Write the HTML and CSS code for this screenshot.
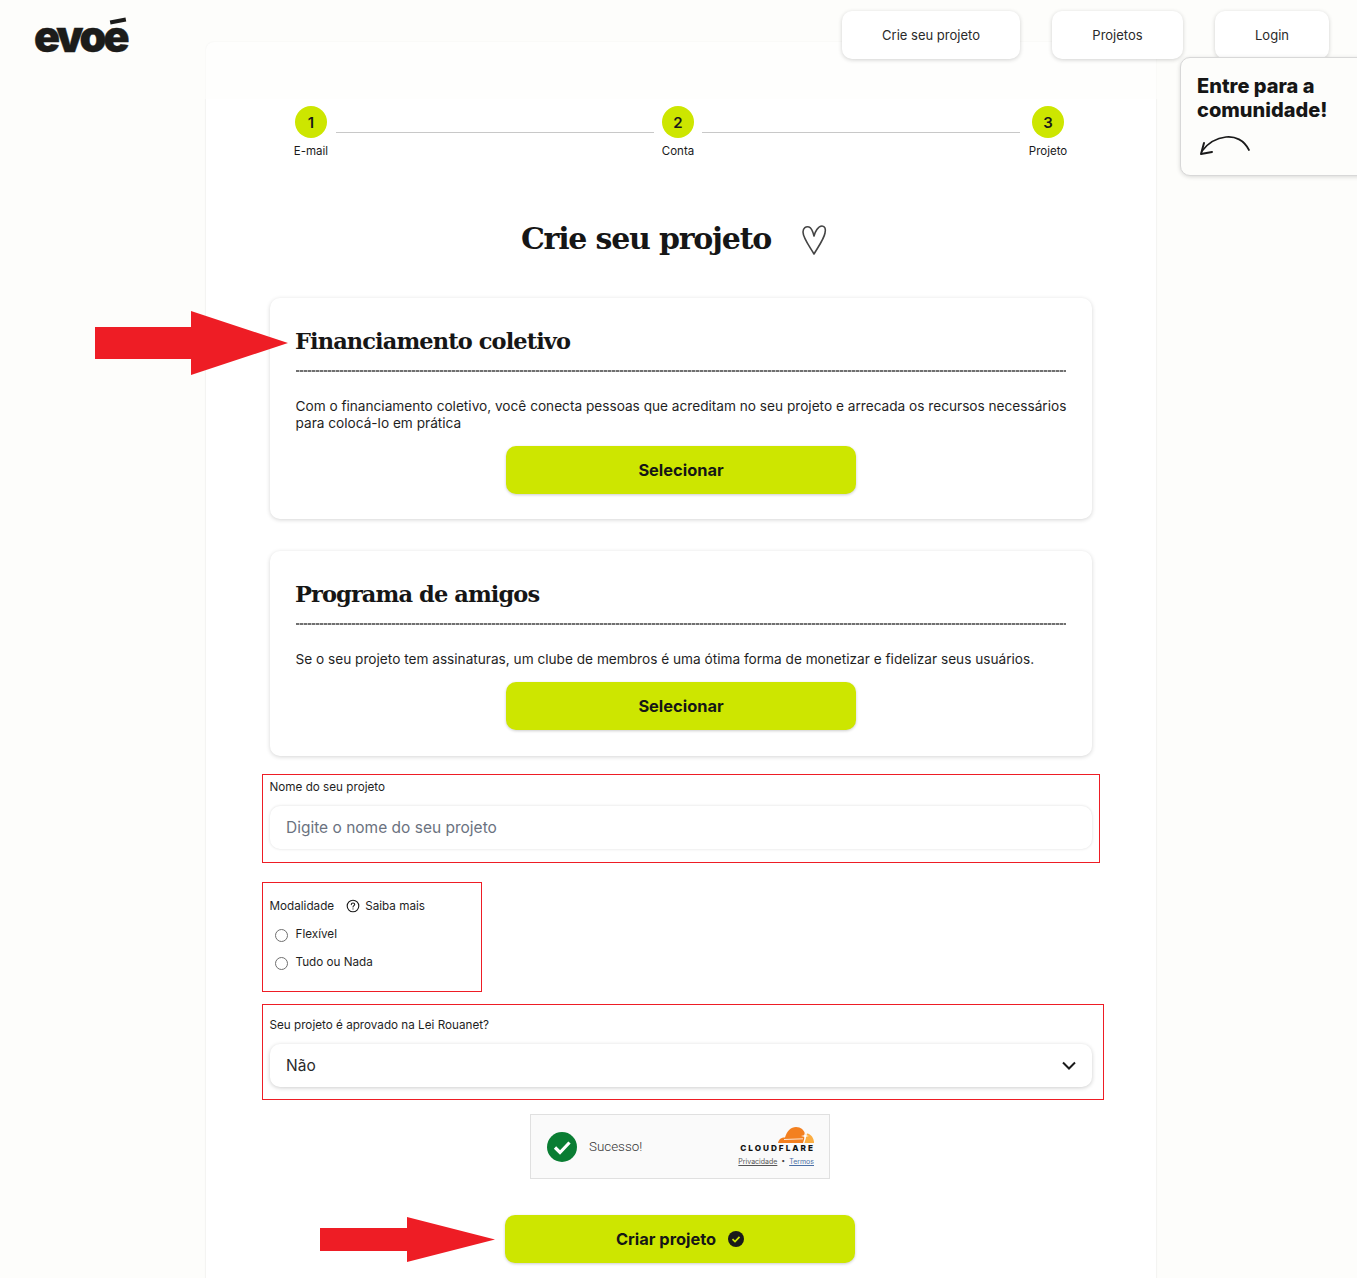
FILE: index.html
```html
<!DOCTYPE html>
<html lang="pt-BR">
<head>
<meta charset="utf-8">
<title>Crie seu projeto - evoé</title>
<link rel="stylesheet" href="styles.css">
</head>
<body>
<div class="page">
  <header class="topbar">
    <span class="logo">evoe</span>
    <nav class="nav">
      <a class="nav-btn nav-create">Crie seu projeto</a>
      <a class="nav-btn nav-projects">Projetos</a>
      <a class="nav-btn nav-login">Login</a>
    </nav>
  </header>

  <aside class="community">
    <p class="community-title">Entre para a comunidade!</p>
    <svg class="community-arrow" width="52" height="24" viewBox="0 0 52 24" fill="none" stroke="#1a1a1a" stroke-linecap="round" stroke-linejoin="round"><path d="M50 15C45 5 36 1 27 2C18 3 9 8 3 16" stroke-width="1.7"/><path d="M5 8L2 19L13 17" stroke-width="2"/></svg>
  </aside>

  <main class="panel">
    <ol class="steps">
      <li class="step"><span class="step-num">1</span><span class="step-label">E-mail</span></li>
      <li class="step-line line-a"></li>
      <li class="step"><span class="step-num">2</span><span class="step-label">Conta</span></li>
      <li class="step-line line-b"></li>
      <li class="step"><span class="step-num">3</span><span class="step-label">Projeto</span></li>
    </ol>

    <div class="title-row">
      <h1 class="title">Crie seu projeto</h1>
      <svg class="heart" width="26" height="32" viewBox="0 0 26 32" fill="none" stroke="#444" stroke-width="1.6" stroke-linecap="round" stroke-linejoin="round"><path d="M13 30C9 23 2 14 2 8C2 4 5 2 8 3C11 4 12 8 13 12C14 8 17 2 21 2C24 2 25 5 24 9C23 15 17 23 13 30Z"/></svg>
    </div>

    <section class="card card-first">
      <h2 class="card-title">Financiamento coletivo</h2>
      <p class="card-text">Com o financiamento coletivo, você conecta pessoas que acreditam no seu projeto e arrecada os recursos necessários para colocá-lo em prática</p>
      <button class="btn btn-select" type="button">Selecionar</button>
    </section>

    <section class="card card-second">
      <h2 class="card-title">Programa de amigos</h2>
      <p class="card-text">Se o seu projeto tem assinaturas, um clube de membros é uma ótima forma de monetizar e fidelizar seus usuários.</p>
      <button class="btn btn-select" type="button">Selecionar</button>
    </section>

    <div class="field field-name">
      <label class="label">Nome do seu projeto</label>
      <div class="input input-flat">Digite o nome do seu projeto</div>
    </div>

    <div class="field field-mode">
      <div class="mode-head">
        <span class="label">Modalidade</span>
        <span class="more">
          <svg width="14" height="14" viewBox="0 0 14 14" fill="none" stroke="#1a1a1a" stroke-width="1.1" stroke-linecap="round"><circle cx="7" cy="7" r="5.8"/><path d="M5.3 5.6C5.3 4.6 6.1 4 7 4C8 4 8.7 4.7 8.7 5.5C8.7 6.6 7 6.7 7 8"/><path d="M7 9.9V10"/></svg>
          Saiba mais
        </span>
      </div>
      <div class="radio-row"><span class="radio"></span><span class="label">Flexível</span></div>
      <div class="radio-row"><span class="radio"></span><span class="label">Tudo ou Nada</span></div>
    </div>

    <div class="field field-rouanet">
      <label class="label">Seu projeto é aprovado na Lei Rouanet?</label>
      <div class="input input-select">
        <span>Não</span>
        <svg width="14" height="9" viewBox="0 0 14 9" fill="none" stroke="#1a1a1a" stroke-width="2"><path d="M1 1.5L7 7.5L13 1.5"/></svg>
      </div>
    </div>

    <div class="turnstile">
      <svg class="ts-check" width="30" height="30" viewBox="0 0 30 30"><circle cx="15" cy="15" r="15" fill="#0a7d33"/><path d="M8 15.5L13 20.5L22.5 10.5" fill="none" stroke="#fff" stroke-width="3.2"/></svg>
      <span class="ts-text">Sucesso!</span>
      <div class="ts-brand">
        <svg width="36" height="16" viewBox="0 0 36 16"><path d="M0 16C1 12 3 10.500 7 10.500C9 4 13 0 18 0C23 0 26 3 27.500 7.500L25 16Z" fill="#f38020"/><path d="M26.500 16L29 6.500C33 7 36 11 36 16Z" fill="#fbad41"/><path d="M6 12.500L25 11.800" stroke="#fff" stroke-width="0.8"/><path d="M27 5L27.800 8.200L31 9L27.800 9.800L27 13L26.200 9.800L23 9L26.200 8.200Z" fill="#fff"/></svg>
        <span class="ts-name">CLOUDFLARE</span>
        <span class="ts-links"><u class="ts-link">Privacidade</u> &nbsp;•&nbsp; <u class="ts-link ts-link-blue">Termos</u></span>
      </div>
    </div>

    <button class="btn btn-submit" type="button">Criar projeto
      <svg width="16" height="16" viewBox="0 0 16 16"><circle cx="8" cy="8" r="8" fill="#1a1a1a"/><path d="M4.5 8.200L7 10.600L11.500 5.800" fill="none" stroke="#cde600" stroke-width="1.7"/></svg>
    </button>
  </main>

  <svg class="red-arrow arrow-top" width="193" height="64" viewBox="0 0 193 64"><path d="M0 16H96V0L193 32L96 64V48H0Z" fill="#ee1d25"/></svg>
  <svg class="red-arrow arrow-bottom" width="175" height="45" viewBox="0 0 175 45"><path d="M0 11H87V0L175 22.500L87 45V34H0Z" fill="#ee1d25"/></svg>
</div>
</body>
</html>
```

FILE: styles.css
```css
* { box-sizing: border-box; }
html, body { margin: 0; padding: 0; }
body {
  background: #fff;
  color: #1a1a1a;
  font-family: "Inter", "Noto Sans", sans-serif;
  overflow: hidden;
}
.page {
  position: relative;
  width: 1357px;
  height: 1278px;
  background: #fdfdfb;
  overflow: hidden;
}
.topbar {
  position: absolute;
  top: 0;
  left: 0;
  right: 0;
  height: 99px;
  z-index: 3;
  display: flex;
  justify-content: space-between;
  align-items: flex-start;
  padding: 11px 28px 0 34px;
  background: rgba(253, 253, 251, .6);
}
.logo {
  position: relative;
  font-family: "Inter", sans-serif;
  font-weight: 900;
  font-size: 43px;
  line-height: 50px;
  letter-spacing: -3.1px;
  color: #1c1c1a;
  -webkit-text-stroke: 0.4px #1c1c1a;
}
.logo::after {
  content: "";
  position: absolute;
  left: 76px;
  top: 8px;
  width: 16px;
  height: 4px;
  background: #1c1c1a;
  transform: rotate(-11deg);
}
.nav { display: flex; gap: 32px; }
.nav-btn {
  display: flex;
  align-items: center;
  justify-content: center;
  height: 48px;
  background: #fff;
  border-radius: 10px;
  box-shadow: 0 1px 4px rgba(0,0,0,.18);
  font-size: 13px;
  color: #2a2a2a;
}
.nav-create { width: 178px; }
.nav-projects { width: 131px; }
.nav-login { width: 114px; }
.community {
  position: absolute;
  top: 57px;
  left: 1180px;
  width: 190px;
  height: 119px;
  z-index: 4;
  padding: 16px 16px 0;
  background: #fdfdfb;
  border: 1px solid #d8d8d8;
  border-radius: 10px;
  box-shadow: 0 1px 4px rgba(0,0,0,.15);
}
.community-title {
  margin: 0;
  font-size: 20px;
  line-height: 24px;
  font-weight: 800;
  color: #161616;
}
.community-arrow { display: block; margin-top: 13px; margin-left: 2px; }
.panel {
  position: absolute;
  top: 42px;
  left: 206px;
  width: 950px;
  height: 1300px;
  background: #fff;
  box-shadow: 0 0 2px rgba(0,0,0,.14);
  border-radius: 8px 8px 0 0;
  padding: 64px 56px 0;
}
.steps {
  list-style: none;
  display: flex;
  align-items: flex-start;
  margin: 0;
  padding: 0 32px 0 29px;
  height: 52px;
}
.step { display: flex; flex-direction: column; align-items: center; flex: none; width: 40px; }
.step-num {
  width: 32px;
  height: 32px;
  border-radius: 50%;
  background: #cde600;
  display: flex;
  align-items: center;
  justify-content: center;
  font-weight: 600;
  font-size: 15px;
}
.step-label { font-size: 11.5px; line-height: 16px; margin-top: 5px; white-space: nowrap; }
.step-line { height: 1px; background: #c8c8c8; margin-top: 26px; flex: none; }
.line-a { width: 318px; margin-left: 5px; margin-right: 4px; }
.line-b { width: 318px; margin-left: 4px; margin-right: 8px; }
.title-row {
  display: flex;
  align-items: center;
  justify-content: center;
  gap: 30px;
  margin-top: 56px;
  padding-right: 14px;
  height: 48px;
}
.title {
  margin: 0;
  font-family: "DejaVu Serif", serif;
  font-weight: 700;
  font-size: 30px;
  letter-spacing: -1.2px;
  color: #161616;
}
.heart { margin-top: 4px; }
.card {
  margin: 0 8px;
  width: 822px;
  background: #fff;
  border-radius: 10px;
  box-shadow: 0 1px 4px rgba(0,0,0,.17);
  padding: 26px 26px 25px;
  display: flex;
  flex-direction: column;
}
.card-first { margin-top: 36px; height: 221px; }
.card-second { margin-top: 32px; height: 205px; }
.card-title {
  margin: 0;
  font-family: "DejaVu Serif", serif;
  font-weight: 700;
  font-size: 22.5px;
  line-height: 34px;
  letter-spacing: -0.9px;
  text-indent: -1px;
  color: #161616;
  padding-bottom: 14px;
  background: repeating-linear-gradient(90deg, #707070 0 3px, #bdbdbd 3px 4px) left bottom / 100% 2px no-repeat;
  height: 48px;
}
.card-text {
  margin: 26px -2px 14px -0.5px;
  font-size: 13.65px;
  line-height: 17px;
  color: #1f1f1f;
}
.btn {
  display: flex;
  align-items: center;
  justify-content: center;
  gap: 12px;
  width: 350px;
  height: 48px;
  border: 0;
  border-radius: 10px;
  background: #cde600;
  box-shadow: 0 1px 3px rgba(0,0,0,.2);
  color: #161616;
  font-family: inherit;
  font-weight: 700;
  font-size: 16.4px;
  padding: 0;
}
.btn-select { align-self: center; }
.field { border: 1px solid #ee1d25; padding-left: 7px; }
.label { font-size: 11.7px; line-height: 16px; color: #1f1f1f; display: block; margin-left: -0.5px; }
.field-name { margin-top: 18px; width: 838px; height: 89px; padding-top: 4px; }
.input {
  width: 822px;
  height: 43px;
  border-radius: 10px;
  background: #fff;
  display: flex;
  align-items: center;
  padding: 0 16px;
  font-size: 15.5px;
}
.input-flat { margin-top: 11px; color: #6b7280; box-shadow: 0 0 3px rgba(0,0,0,.14); }
.field-mode { margin-top: 19px; width: 220px; height: 110px; padding-top: 15px; }
.mode-head { display: flex; align-items: center; gap: 12px; height: 16px; }
.more { display: flex; align-items: center; gap: 5px; font-size: 11.7px; color: #1f1f1f; }
.radio-row { display: flex; align-items: center; height: 16px; margin-top: 12px; gap: 8px; padding-left: 5px; }
.radio { width: 13px; height: 13px; border: 1px solid #6f6f6f; border-radius: 50%; background: #fff; margin-top: 2px; }
.field-rouanet { margin-top: 12px; width: 842px; height: 96px; padding-top: 12px; }
.input-select {
  margin-top: 11px;
  justify-content: space-between;
  color: #2a2a2a;
  box-shadow: 0 1px 4px rgba(0,0,0,.2);
}
.turnstile {
  margin: 14px 0 0 268px;
  width: 300px;
  height: 65px;
  background: #fafafa;
  border: 1px solid #e0e0e0;
  display: flex;
  align-items: center;
  padding: 0 15px 0 16px;
}
.ts-text { margin-left: 12px; font-size: 13.4px; font-weight: 300; color: #333; font-family: "Roboto", sans-serif; }
.ts-brand { margin-left: auto; margin-top: 1px; display: flex; flex-direction: column; align-items: flex-end; }
.ts-name { font-size: 8.2px; line-height: 10px; font-weight: 800; letter-spacing: 2px; margin-right: -1px; color: #111; }
.ts-links { font-size: 7px; line-height: 10px; margin-top: 4px; color: #444; }
.ts-link { color: #555; }
.ts-link-blue { color: #4a6fa5; }
.btn-submit { margin: 36px 0 0 243px; }
.red-arrow { position: absolute; z-index: 2; }
.arrow-top { left: 95px; top: 311px; }
.arrow-bottom { left: 320px; top: 1217px; }
```
